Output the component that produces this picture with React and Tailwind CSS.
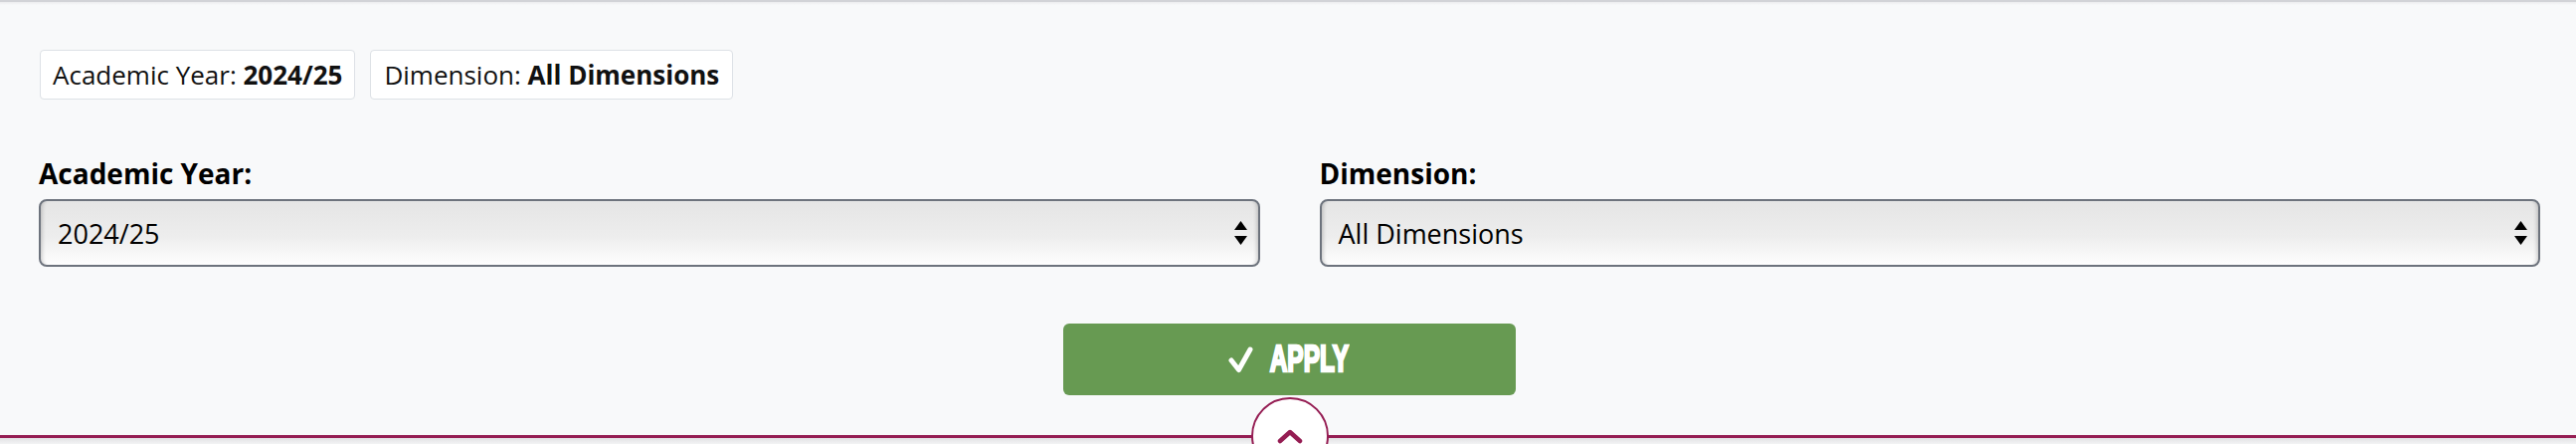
import React from "react";

function SelectArrows() {
  return (
    <svg width="13" height="24" viewBox="0 0 13 24" className="shrink-0">
      <polygon points="6.5,0 13,9 0,9" fill="#000" />
      <polygon points="0,15 13,15 6.5,24" fill="#000" />
    </svg>
  );
}

function FakeSelect({ value }) {
  return (
    <div className="flex h-[68px] items-center justify-between rounded-[8px] border-2 border-[#6d737d] bg-linear-to-b from-[#e5e5e5] via-[#ededed] via-55% to-[#fefefe] pl-[17px] pr-[11px] shadow-[inset_5px_0_4px_-4px_rgba(0,0,0,0.22),inset_-5px_0_4px_-4px_rgba(0,0,0,0.22)]">
      <span className="text-[27px] leading-[37px] text-black">{value}</span>
      <SelectArrows />
    </div>
  );
}

export default function App() {
  return (
    <div className="relative h-[446px] w-full overflow-hidden border-t-2 border-[#d2d3d7] bg-[#f8f9fa] font-['Open_Sans',sans-serif]">
      <div className="h-[3px] bg-linear-to-b from-[#ececee] to-[#f8f9fa]" />
      <div className="pl-[39px] pr-[36px]">
        <div className="mt-[45px] ml-[1px] flex gap-[15px]">
          <div className="h-[50px] rounded-[4px] border border-[#dde1e6] bg-white px-[12px] text-[26px] leading-[48px] text-[#111] whitespace-nowrap">
            Academic Year: <span className="font-bold">2024/25</span>
          </div>
          <div className="h-[50px] rounded-[4px] border border-[#dde1e6] bg-white px-[13px] text-[26px] leading-[48px] text-[#111] whitespace-nowrap">
            Dimension: <span className="font-bold">All Dimensions</span>
          </div>
        </div>

        <div className="mt-[54px] grid grid-cols-2 gap-[60px]">
          <div>
            <div className="mb-[6px] text-[28px] font-bold leading-[40px] text-black">Academic Year:</div>
            <FakeSelect value="2024/25" />
          </div>
          <div>
            <div className="mb-[6px] text-[28px] font-bold leading-[40px] text-black">Dimension:</div>
            <FakeSelect value="All Dimensions" />
          </div>
        </div>

        <button className="mx-auto mt-[57px] flex h-[72px] w-[455px] items-center justify-center gap-[14px] rounded-[6px] bg-[#679a52] text-white">
          <svg width="26" height="28" viewBox="0 0 26 28" className="shrink-0">
            <polyline points="3,15 10.5,24.5 22,4" fill="none" stroke="#fff" strokeWidth="5" strokeLinecap="round" strokeLinejoin="round" />
          </svg>
          <span className="flex w-[84px] justify-center">
            <span className="inline-block scale-x-[0.68] whitespace-nowrap font-['Liberation_Sans',Arial,sans-serif] text-[36px] font-bold leading-none [-webkit-text-stroke:2.5px_#fff]">
              APPLY
            </span>
          </span>
        </button>
      </div>

      <div className="mt-[40px] border-t-[3px] border-[#951d53]">
        <div className="h-[8px] bg-linear-to-b from-[#e2e2e4] to-[#f8f9fa]" />
      </div>

      <div className="absolute left-[1258px] top-[397px] flex h-[78px] w-[78px] justify-center rounded-full border-2 border-[#951d53] bg-white pt-[30px]">
        <svg width="26" height="15" viewBox="0 0 26 15">
          <polyline points="3,12 13,3 23,12" fill="none" stroke="#951d53" strokeWidth="4.5" strokeLinecap="round" strokeLinejoin="round" />
        </svg>
      </div>
    </div>
  );
}
